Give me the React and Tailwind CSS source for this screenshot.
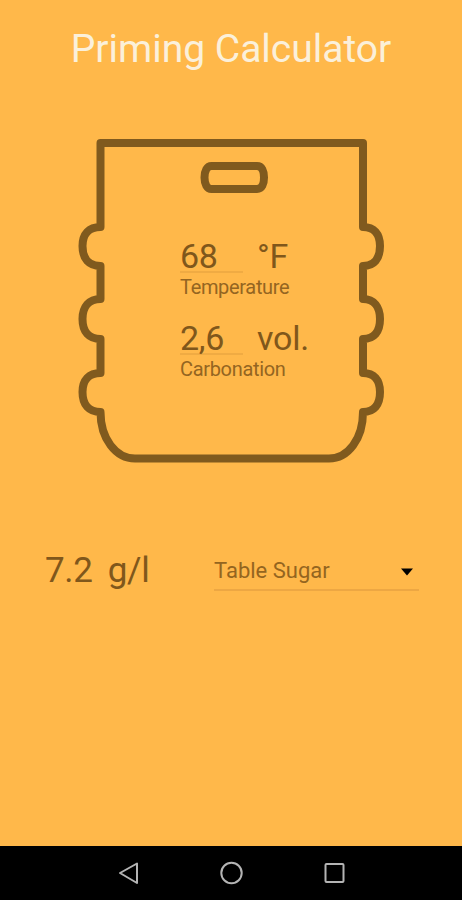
function Keg() {
  return (
    <svg
      viewBox="0 0 308 326"
      className="col-start-1 row-start-1 h-[326px] w-[308px]"
      fill="none"
      stroke="#805a1e"
      strokeWidth="8"
      strokeLinejoin="round"
    >
      <path d="M23.5 5H286V89C297 89 303 96 303 108C303 121 297 128 286 128V161C297 161 303 169 303 181C303 194 297 201 286 201V235C297 235 303 242 303 254C303 267 297 274 286 274C286 301 271 320.500 252 320.500H58C39 320.500 23.500 301 23.500 274C12 274 5.500 267 5.500 254C5.500 242 12 235 23.500 235V201C12 201 5.500 194 5.500 181C5.500 169 12 161 23.500 161V128C12 128 5.500 121 5.500 108C5.500 96 12 89 23.500 89Z" />
      <path d="M134.500 28H180C185 28 187 33 187 39.500C187 46 185 51 180 51H134.500C130 51 127.500 46 127.500 39.500C127.500 33 130 28 134.500 28Z" />
    </svg>
  );
}

function Field({ value, unit, label }) {
  return (
    <div className="h-[82px]">
      <div className="flex">
        <div className="h-[37px] w-[63px] border-b-2 border-[#f0ab43] text-[34px] leading-[41px] tracking-[-0.3px]">
          {value}
        </div>
        <div className="ml-[14px] text-[34px] leading-[41px] tracking-[-0.2px]">{unit}</div>
      </div>
      <p className="-mt-[2px] text-[20px] leading-[24px] tracking-[-0.33px] text-[#946521]">{label}</p>
    </div>
  );
}

export default function App() {
  const fields = [
    ['68', '°F', 'Temperature'],
    ['2,6', 'vol.', 'Carbonation'],
  ];

  return (
    <div className="flex h-[900px] w-[462px] flex-col bg-[#ffb84a] font-[Roboto,sans-serif] text-[#80571b]">
      <h1 className="pt-[25px] text-center text-[39px] leading-[48px] text-[#fbf0da]">Priming Calculator</h1>

      <div className="mt-[65px] ml-[77px] grid w-[308px]">
        <Keg />
        <div className="col-start-1 row-start-1 pt-[98px] pl-[103px]">
          {fields.map(([value, unit, label]) => (
            <Field key={label} value={value} unit={unit} label={label} />
          ))}
        </div>
      </div>

      <div className="mt-[86px] flex h-[41px] pl-[45px]">
        <div className="flex w-[169px] gap-[15px] text-[35px] leading-[42px] tracking-[-0.3px]">
          <span>7.2</span>
          <span>g/l</span>
        </div>
        <button
          type="button"
          className="flex h-[41px] w-[205px] items-center justify-between border-b-2 border-[#eda743] pt-[2px] pr-[5px] text-[22px] text-[#94651f]"
        >
          <span>Table Sugar</span>
          <svg viewBox="0 0 14 8" className="mt-[3px] h-[8px] w-[14px]" fill="#000">
            <path d="M1 0.500H13L7 7.500Z" />
          </svg>
        </button>
      </div>

      <nav className="mt-auto h-[54px] bg-black">
        <svg viewBox="0 0 462 54" className="h-[54px] w-[462px]" fill="none" stroke="#b4b4b4" strokeWidth="2">
          <path d="M120 27L137 17.500V37Z" strokeLinejoin="round" />
          <circle cx="231.500" cy="27" r="10.200" />
          <rect x="325.500" y="18" width="18" height="18" rx="1" />
        </svg>
      </nav>
    </div>
  );
}
